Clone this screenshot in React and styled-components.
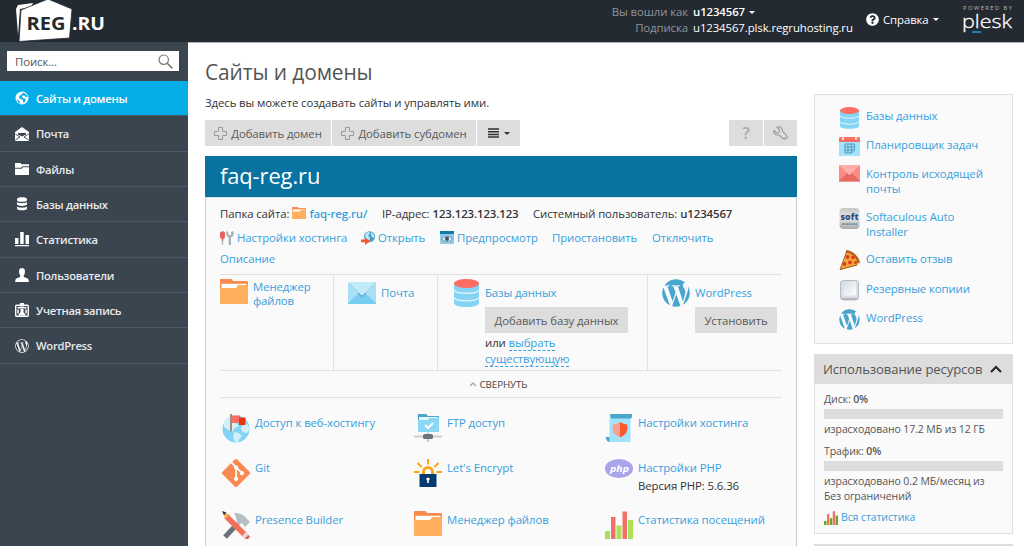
import React from 'react';
import styled, { createGlobalStyle } from 'styled-components';
import { FaWordpress, FaWordpressSimple, FaGitAlt, FaQuestionCircle } from 'react-icons/fa';

const Global = createGlobalStyle`
  * { box-sizing: border-box; }
  html, body { margin: 0; height: 546px; overflow: hidden; background: #fff; }
  body { font: 11.4px/15px "Open Sans", "Noto Sans", sans-serif; letter-spacing: -0.1px; color: #333; }
  svg { display: block; flex: none; letter-spacing: 0; }
`;

const Page = styled.div`width: 1024px; height: 546px; overflow: hidden; display: flex; flex-direction: column;`;
const T = styled.span`
  white-space: nowrap;
  font-weight: ${p => p.$w || 'inherit'};
  color: ${p => p.$c || 'inherit'};
  font-size: ${p => p.$s || 'inherit'};
`;
const Link = styled.a`color: #38a0dd; white-space: nowrap; font-weight: ${p => p.$w || 400};`;

/* Header */
const Header = styled.header`
  height: 42px; flex: none; background: #232a31; color: #fff; display: flex; align-items: flex-start;
`;
const Logo = styled.div`width: 188px; padding-left: 15px; flex: none;`;
const Account = styled.div`
  margin-left: auto; display: grid; grid-template-columns: auto 161px; column-gap: 5px; padding-top: 4px;
  line-height: 16px;
`;
const AccountLabel = styled(T)`color: #8f9499; text-align: right;`;
const AccountValue = styled.div`display: flex; align-items: center; gap: 4px; white-space: nowrap;`;
const Help = styled.div`display: flex; align-items: center; gap: 4px; margin: 12px 22px 0 12px; width: 74px; white-space: nowrap;`;
const Powered = styled.div`width: 62px; flex: none;`;
const Caret = styled.i`
  border: 3px solid transparent; border-top: 3.5px solid ${p => p.$c || '#fff'}; border-bottom: 0; width: 6px; flex: none;
`;

/* Sidebar */
const Body = styled.div`display: flex; flex: 1; min-height: 0;`;
const Sidebar = styled.nav`width: 188px; flex: none; background: #3a4550; padding-top: 9px;`;
const Search = styled.div`
  height: 20px; margin: 0 9px 10px 7px; padding: 0 6px 0 8px; background: #fff; color: #555;
  display: flex; align-items: center; justify-content: space-between;
`;
const NavItem = styled.a`
  height: 35.35px; display: flex; align-items: center; gap: 7px; padding: 0.4px 0 0 15px; font-weight: 600;
  color: ${p => (p.$on ? '#fff' : '#e9ebed')}; background: ${p => (p.$on ? '#04ade7' : 'none')};
  border-bottom: 1px solid #4b5763; font-size: 11.2px; letter-spacing: -0.25px;
`;

/* Content */
const Content = styled.div`flex: 1; border-top: 1px solid #b5b5b8; padding: 0 11px 0 17px; display: flex; align-items: flex-start;`;
const Main = styled.main`width: 592px; flex: none;`;
const Title = styled.h1`margin: 16px 0 0; font-weight: 400; font-size: 20.9px; line-height: 26px; color: #555;`;
const Intro = styled.p`margin: 10px 0 0; line-height: 15px;`;
const Toolbar = styled.div`display: flex; gap: 1px; margin-top: 10px; height: 26px;`;
const Button = styled.button`
  all: unset; box-sizing: border-box; height: 26px; width: ${p => p.$width}px; background: #ddd; color: #5a5a5a;
  display: flex; align-items: center; justify-content: center; gap: ${p => p.$gap || 4}px; white-space: nowrap;
  margin-top: ${p => p.$mt || 0}px;
`;
const Spacer = styled.div`flex: 1;`;
const Panel = styled.section`margin-top: 10px; height: 420px; background: #fafafa; border: solid #ccc; border-width: 0 1px;`;
const PanelHead = styled.h2`
  margin: 0 -1px; height: 42px; background: #0872a0; color: #fff; font-weight: 400; font-size: 21.9px; line-height: 40px;
  padding-left: 15px; border-bottom: 1px solid #d4e2e9;
`;
const PanelBody = styled.div`padding: 7px 14px 0 14px;`;
const Row = styled.div`display: flex; align-items: center; height: ${p => p.$h}px;`;
const Part = styled.div`display: flex; align-items: center; gap: 3px; width: ${p => p.$width}px; flex: none; white-space: nowrap;`;
const Tools = styled.div`display: flex; height: 97px; margin-top: 11px; border: solid #e1e1e1; border-width: 1px 0;`;
const Tool = styled.div`
  display: flex; align-items: flex-start; gap: ${p => p.$gap || 6}px; width: ${p => p.$width}px; flex: none;
  padding: 4px 0 0 ${p => p.$pad || 0}px; border-right: ${p => (p.$last ? 0 : 1)}px solid #e1e1e1;
`;
const MailSlot = styled.div`padding-top: 3px;`;
const ToolText = styled.div`padding-top: ${p => p.$top || 6}px; line-height: ${p => p.$lh || 15}px;`;
const Choose = styled(Link)`border-bottom: 1px dashed #38a0dd; display: inline-block; line-height: 15px;`;
const Collapse = styled.div`
  height: 27px; display: flex; align-items: center; justify-content: center; gap: 3px; font-size: 9.8px; color: #444;
  padding-right: 6px; border-bottom: 1px solid #e1e1e1;
`;
const Grid = styled.div`display: grid; grid-template-columns: 192px 191px 1fr; grid-template-rows: 45px 52px 45px; padding: 16px 0 0 2px;`;
const Feature = styled.div`display: flex; align-items: flex-start; gap: 5px;`;
const FeatureText = styled.div`line-height: 18px; white-space: nowrap;`;

/* Right column */
const Aside = styled.aside`width: 199px; margin: 51px 0 0 17px; flex: none;`;
const Box = styled.div`background: #fafafa; border: 1px solid #e0e0e0;`;
const Shortcuts = styled(Box)`height: 250px; padding: 12px 0 0 24px;`;
const Shortcut = styled.div`
  display: flex; gap: 6px; height: ${p => p.$h || 29.2}px; align-items: flex-start; line-height: 15px;
  & > div { padding-top: 1px; }
`;
const Usage = styled(Box)`margin-top: 10px; height: 180px;`;
const UsageHead = styled.div`
  height: 29px; background: #ddd; color: #555; font-size: 13.1px; display: flex; align-items: center;
  justify-content: space-between; padding: 0 10px 1px 8px;
`;
const UsageBody = styled.div`padding: 8px 9px 0; font-size: 10.5px; line-height: 15px; color: #555;`;
const Bar = styled.div`height: 10px; background: #ddd; margin: 2px 0 3px;`;
const Metric = styled.div`margin-bottom: 7px; height: ${p => p.$h}px; white-space: nowrap;`;
const AllStats = styled.div`display: flex; align-items: center; gap: 3px; margin-top: -1px;`;
const NextBox = styled.div`margin-top: 10px; height: 30px; background: #ddd;`;

const Svg = ({ w, h = w, vb, children }) => (
  <svg width={w} height={h} viewBox={vb || `0 0 ${w} ${h}`} fill="none">{children}</svg>
);

/* WordPress disc without its outer ring */
const WpDisc = styled(FaWordpress).attrs({ viewBox: '41 41 430 430' })`color: #4ba6cf; border-radius: 50%; overflow: hidden;`;

const RegLogo = () => (
  <Svg w={95} h={42}>
    <path d="M1 9 3 5 18 3 16 7 5 9 3 35Z" fill="#fff" />
    <path d="M6 10 33-1 57 9 54.5 38 4 41.5Z" fill="#fff" stroke="#232a31" strokeWidth=".8" />
    <text x="11.500" y="29.500" fontFamily="Open Sans" fontWeight="700" fontSize="18" fill="#232a31" textLength="39" lengthAdjust="spacingAndGlyphs">REG</text>
    <text x="57" y="29.500" fontFamily="Open Sans" fontWeight="700" fontSize="18" fill="#fff" textLength="33" lengthAdjust="spacingAndGlyphs">.RU</text>
  </Svg>
);
const PleskLogo = () => (
  <Svg w={54} h={40}>
    <text x="1" y="10" fontFamily="Open Sans" fontSize="5.800" fill="#b5b9bc" textLength="49">POWERED BY</text>
    <text x="0" y="27.500" fontFamily="Open Sans" fontWeight="300" fontSize="18.500" fill="#fff" stroke="#fff" strokeWidth=".3" textLength="50" lengthAdjust="spacingAndGlyphs">plesk</text>
    <path d="M10 31.200h9v1.600h-9z" fill="#1b9bd0" />
  </Svg>
);
const SearchIcon = () => (
  <Svg w={15}><circle cx="5.700" cy="5.700" r="4.700" stroke="#777" strokeWidth="1.200" /><path d="m9 9 5.300 5.300" stroke="#777" strokeWidth="1.700" /></Svg>
);
const NavGlobe = () => (
  <Svg w={14} vb="0 0 28 28"><circle cx="14" cy="14" r="13" fill="#fff" />
    <path d="M16 3.500c6 1 9 5 9 9l-4-1-3-3-3 1-1 3 3 2 4 1v4l-3 4-2-2v-4l-4-1-4-3 1-4 4-2Z" fill="#04ade7" /><path d="M4 17l4 2 2 4 2 2C8 25 5 22 4 17Z" fill="#04ade7" /></Svg>
);
const NavMail = () => (
  <Svg w={14}><path fill="#fff" d="M0 5 7 0l7 5v9H0Z" /><path d="M.3 7 5 10 .3 13M13.700 7 9 10l4.700 3" stroke="#3a4550" strokeWidth=".9" /><path d="M3 6h8v1.500L7 9.500 3 7.500Z" fill="#3a4550" /></Svg>
);
const NavFolder = () => (
  <Svg w={14} h={12}><path fill="#fff" d="M0 0h5.500l1 1.300H14v2H7.500L6.300 4.800H0ZM0 5.800h6.700L8 4.300h6V12H0Z" /></Svg>
);
const NavDb = () => (
  <Svg w={14} h={14}><path fill="#fff" d="M2 2.200C2-.4 12-.4 12 2.200v1c0 2-10 2-10 0ZM2 5c2 1.600 8 1.600 10 0v2.600c-1 1.900-9 1.900-10 0Zm0 4.600c2 1.600 8 1.600 10 0v2.200c-1 2-9 2-10 0Z" /></Svg>
);
const NavStats = () => (
  <Svg w={14} h={15}><path fill="#fff" d="M0 6h3.400v6H0ZM5.200 0h3.500v12H5.200Zm5.300 3H14v9h-3.500ZM0 13h14v1.200H0Z" /></Svg>
);
const NavUser = () => (
  <Svg w={14}><path fill="#fff" d="M4 3.400C4-1 10-1 10 3.400c0 2.400-1 3.400-1.400 4.700L9 9l4.200 1.800.8 3.200H0l.8-3.200L5 9l.4-.9C5 6.800 4 5.800 4 3.400Z" /></Svg>
);
const NavBadge = () => (
  <Svg w={14}><rect x=".7" y="2.200" width="12.600" height="11" rx="1" stroke="#fff" strokeWidth="1.400" /><path fill="#fff" d="M5 0h4v3.500H5ZM2.500 4h9v1.500h-9ZM5.500 6h3v3l2.500 3.500H3L5.500 9ZM2.300 6.500h1.500v4H2.300Zm8 0h1.500v4h-1.500Z" /></Svg>
);
const Plus = () => (
  <Svg w={13}><path d="M4.500.5h4v4h4v4h-4v4h-4v-4h-4v-4h4Z" stroke="#999" /></Svg>
);
const Menu = () => <Svg w={11} h={10}><path d="M0 1h11M0 3.700h11M0 6.400h11M0 9.100h11" stroke="#333" strokeWidth="1.500" /></Svg>;
const Wrench = () => (
  <Svg w={15}><path d="M1 4.500 3.500 7 6 6.500 6.500 4 4 1.200C6 .2 9.500 1 9.500 5l4.500 5c1 1.500-1.500 4-3.200 3L5.800 8.800C2.500 9.800.2 7 1 4.500Z" stroke="#999" strokeWidth="1.100" /><circle cx="12" cy="11.800" r=".7" fill="#999" /></Svg>
);
const Folder = ({ w = 28 }) => (
  <Svg w={w} h={w * 25 / 28} vb="0 0 28 25"><path fill="#fb8b4d" d="M0 1q0-1 1-1h10q1 0 2 2h14q1 0 1 1v6H0Z" /><path fill="#fff" d="M1.500 4.800h25V11h-25Z" /><path fill="#ffb05c" d="M0 9h16l2-3h9q1 0 1 1v17q0 1-1 1H1q-1 0-1-1Z" /></Svg>
);
const Mail = ({ w = 28, a = '#a7e1f8', b = '#77cdf0', c = '#c2ebfa', l = '#69aeca' }) => (
  <Svg w={w} h={w * 22 / 28} vb="0 0 28 22"><rect width="28" height="22" rx="1" fill={a} /><path d="m0 21 11-10h6l11 10v1H0Z" fill={b} /><path d="M0 0h28v1L16 13q-2 2-4 0L0 1Z" fill={c} /><path d="m10 11 2 2q2 2 4 0l2-2" stroke={l} strokeWidth="1.400" /><path d="m1 1 11 12m4 0L27 1" stroke={l} strokeWidth=".5" /></Svg>
);
const Db = ({ w = 25 }) => (
  <Svg w={w} h={w * 28 / 25} vb="0 0 25 28"><path fill="#86d4f5" d="M0 4v20c0 5.300 25 5.300 25 0V4Z" /><path d="M0 11c2 4.500 23 4.500 25 0M0 18.500c2 4.500 23 4.500 25 0" stroke="#e9f8fe" strokeWidth="1.200" /><ellipse cx="12.500" cy="4.500" rx="12.500" ry="4.500" fill="#ff6e62" /></Svg>
);
const Bars = ({ w = 28, g = '#a9e253' }) => (
  <Svg w={w} vb="0 0 28 28"><path fill={g} d="M0 20h5v8H0ZM11.500 14.500h5V28h-5ZM23 9h5v19h-5Z" /><path fill="#f0716a" d="M6 6h4.500v22H6ZM17.500.5h4.500V28h-4.500Z" /></Svg>
);
const HostTools = () => (
  <Svg w={14} h={14}><path fill="#e46262" d="M0 1.500Q2.500-1.200 5 1.500v4Q4.500 8 3.300 8v2H1.700V8Q.5 8 0 5.500Z" /><path fill="#aab0b4" d="M1.900 9h1.200v5H1.900ZM6.500 0l1.800 1v3h2.800V1L13 0q1.500 2.500 0 5l-2 1.500V14H8.700V6.500L6.800 5Q5.500 2.500 6.500 0Z" /></Svg>
);
const Open = () => (
  <Svg w={14} h={14}><circle cx="8.500" cy="5.700" r="5.500" fill="#4a9fc4" /><path fill="#b9e8fa" d="M5 2 8 .8l1 2-2 1.700 2 2-1 4-3-2-1-3Zm5-1 3 3v3l-2-1-1-2Z" /><path fill="#f15a29" d="M0 8.500h4V6.200l5 4-5 3.800v-2.700H0Z" /></Svg>
);
const Preview = () => (
  <Svg w={14} h={13}><rect width="14" height="13" rx="1" fill="#8fc9e4" /><path fill="#127ba5" d="M0 0h14v3H0Z" /><path fill="#e8f4f8" d="M1.500 8Q7 2.500 12.500 8 7 13 1.500 8Z" stroke="#587c90" strokeWidth=".7" /><circle cx="7" cy="7.800" r="2.100" fill="#37566a" /></Svg>
);
const FlagGlobe = () => (
  <Svg w={28} h={29}><circle cx="14" cy="15" r="13.500" fill="#84d3f4" />
    <path d="M2 9C4 5 8 2.500 12 2l3 2-1 5 3 3-4 2-3 4-5-3-3-2ZM22 8l4 3 1.500 5-3 3-4-1-2-4 2-2ZM12 18l5 1 3 3-3 3-1 3.200-3-.2-2-5Z" fill="#d3f0fa" />
    <path d="M9 0v17.500" stroke="#a18069" strokeWidth="1.800" /><path d="M10 1.500h8v7.500h-8Z" fill="#ff6e62" /><path d="M17 3.500h6.500V11H17Z" fill="#e8350d" /></Svg>
);
const Ftp = () => (
  <Svg w={28}><path fill="#4aa3c8" d="M4 0h8l2 2h11v5H4Z" /><path fill="#e5f7fd" d="M5 3h19v5H5Z" /><path fill="#8cd7f6" d="M4 6h10l1.500-2H25v14H4Z" /><path d="m11 11 3 3 5-5" stroke="#fff" strokeWidth="2" /><path d="M0 22.500h28M14 18.500V28" stroke="#c9ced1" strokeWidth="2.200" /><rect x="9" y="20" width="10" height="5" rx="1.500" fill="#6c757d" /></Svg>
);
const Scroll = () => (
  <Svg w={28}><path fill="#a3e2fb" d="M4.500 3h21v25h-21Z" /><path fill="#4ba6cc" d="M5 0h22v3l-1 1.500H7Q5 4 5 0ZM.8 23h3.700v5Q1.500 28 .8 23Z" /><path fill="#f9a090" d="M15 8q-3 2-7.200 2.500Q6 20 15 23.500Z" /><path fill="#fb592b" d="M15 8q3 2 7.200 2.500Q24 20 15 23.500Z" /></Svg>
);
const Encrypt = () => (
  <Svg w={28}><path d="M14 0v5.500M3.500 4l4 4M24.500 4l-4 4M0 13h5.500M22.500 13H28" stroke="#fba618" strokeWidth="2" /><path d="M9.500 16v-3a4.500 4.500 0 0 1 9 0v3" stroke="#fba618" strokeWidth="3" /><rect x="5.500" y="15" width="17" height="13" fill="#073b70" rx=".5" /><path fill="#fff" d="M14 18.800c2.300 0 1.800 2.200.8 2.700v2.500h-1.600v-2.500c-1-.5-1.500-2.700.8-2.700Z" /></Svg>
);
const Php = () => (
  <Svg w={28} h={19}><ellipse cx="14" cy="9.500" rx="14" ry="9.500" fill="#aaa4eb" /><text x="5" y="12.500" fontFamily="Open Sans" fontSize="9.500" fontStyle="italic" fontWeight="700" fill="#fff" textLength="19" lengthAdjust="spacingAndGlyphs">php</text></Svg>
);
const Builder = () => (
  <Svg w={28}><path d="m3 26 9-9.500" stroke="#697278" strokeWidth="5" /><path d="m12 16.500 6-6" stroke="#b5bec3" strokeWidth="4.500" /><path fill="#b5bec3" d="M12 2q8-1 13 6l3 3-5 5-3-4-5 0-1-6Z" /><path d="m4 5 19 19" stroke="#f36f58" strokeWidth="5.500" /><path fill="#fbb040" d="m2 2 6 1.500L3 8Z" /><path fill="#353b3e" d="m0 0 4.500 1.500L2 4.500Z" /><path d="m22 23 2.500 2.500" stroke="#ddd" strokeWidth="5.500" /><path d="m24.500 25.500 2 2" stroke="#ef6059" strokeWidth="5" /></Svg>
);
const Calendar = () => (
  <Svg w={21} h={21} vb="0 -1 21 21"><path fill="#a3e2fb" d="M0 4h21v15H0Z" /><path fill="#ff6e62" d="M0 1q0-1 2-1h17q2 0 2 1v4H0Z" /><path d="M4 0v3M17 0v3" stroke="#fff" strokeWidth="1.500" /><path d="M6 7h9.500v6l-3 3H6ZM9 7v9M12.300 7v9M6 10h9.500M6 13h9.500" stroke="#4a93b3" strokeWidth=".9" /></Svg>
);
const Soft = () => (
  <Svg w={21}><defs><linearGradient id="sg" x2="0" y2="1"><stop stopColor="#c8c8c8" /><stop offset=".5" stopColor="#e5e5e5" /><stop offset="1" stopColor="#aaa" /></linearGradient></defs><rect x=".5" width="20" height="21" rx="4" fill="url(#sg)" /><text x="1.500" y="11.500" fontFamily="Open Sans" fontWeight="800" fontSize="8" fill="#2e4e7e" textLength="18" lengthAdjust="spacingAndGlyphs">soft</text><text x="3" y="16.500" fontFamily="Open Sans" fontWeight="700" fontSize="3" fill="#3269a5" textLength="15">aculous</text></Svg>
);
const Pizza = () => (
  <Svg w={21}><path fill="#f5a638" d="M8 1 18 8q2 3 1 7L1 20Z" /><path d="M7 1q10 2 13 12" stroke="#b9621f" strokeWidth="2.500" /><path d="M7.500 2 1 19.500 18 15" stroke="#9a501a" strokeWidth=".9" /><g fill="#d8401c"><circle cx="8.500" cy="7" r="2" /><circle cx="14" cy="7.500" r="1.800" /><circle cx="11" cy="12.500" r="2" /><circle cx="5.500" cy="14" r="1.900" /><circle cx="16.500" cy="12.500" r="1.600" /></g></Svg>
);
const Key = () => (
  <Svg w={21}><defs><linearGradient id="kg" x2="1" y2="1"><stop stopColor="#d5dce4" /><stop offset="1" stopColor="#fff" /></linearGradient></defs><rect x="1.500" y=".5" width="18" height="19.500" rx="3" fill="#dce0e6" stroke="#b5bac2" /><rect x="4" y="1.500" width="13" height="14" rx="2" fill="url(#kg)" /><path d="M3 18.800h15" stroke="#999fa9" /></Svg>
);

const nav = [
  ['Сайты и домены', NavGlobe], ['Почта', NavMail], ['Файлы', NavFolder], ['Базы данных', NavDb],
  ['Статистика', NavStats], ['Пользователи', NavUser], ['Учетная запись', NavBadge], ['WordPress', () => <FaWordpressSimple size={14} />],
];
const features = [
  ['Доступ к веб-хостингу', FlagGlobe], ['FTP доступ', Ftp], ['Настройки хостинга', Scroll],
  ['Git', () => <FaGitAlt size={28} color="#f98950" viewBox="0 32 448 448" />], ["Let's Encrypt", Encrypt], ['Настройки PHP', Php, 'Версия PHP: 5.6.36'],
  ['Presence Builder', Builder], ['Менеджер файлов', Folder], ['Статистика посещений', Bars],
];
const shortcuts = [
  [['Базы данных'], () => <Svg w={21} h={22} vb="-1 0 27 28"><Db w={25} /></Svg>], [['Планировщик задач'], Calendar],
  [['Контроль исходящей', 'почты'], () => <Mail w={21} a="#fb8a80" b="#e76a62" c="#ffafa8" l="#d9665e" />, 42.500],
  [['Softaculous Auto', 'Installer'], Soft, 42.500], [['Оставить отзыв'], Pizza], [['Резервные копиии'], Key],
  [['WordPress'], () => <WpDisc size={21} />],
];

export default function App() {
  return (
    <Page>
      <Global />
      <Header>
        <Logo><RegLogo /></Logo>
        <Account>
          <AccountLabel>Вы вошли как</AccountLabel>
          <AccountValue><T $w={600}>u1234567</T><Caret /></AccountValue>
          <AccountLabel>Подписка</AccountLabel>
          <AccountValue>u1234567.plsk.regruhosting.ru</AccountValue>
        </Account>
        <Help><FaQuestionCircle size={13} /><T>Справка</T><Caret /></Help>
        <Powered><PleskLogo /></Powered>
      </Header>
      <Body>
        <Sidebar>
          <Search><T>Поиск...</T><SearchIcon /></Search>
          {nav.map(([name, Icon], i) => <NavItem key={name} $on={i === 0}><Icon /><T>{name}</T></NavItem>)}
        </Sidebar>
        <Content>
          <Main>
            <Title>Сайты и домены</Title>
            <Intro>Здесь вы можете создавать сайты и управлять ими.</Intro>
            <Toolbar>
              <Button $width={126}><Plus />Добавить домен</Button>
              <Button $width={144}><Plus />Добавить субдомен</Button>
              <Button $width={43} $gap={5}><Menu /><Caret $c="#333" /></Button>
              <Spacer />
              <Button $width={34}><T $s="16px" $c="#aaa" $w={600}>?</T></Button>
              <Button $width={33}><Wrench /></Button>
            </Toolbar>
            <Panel>
              <PanelHead>faq-reg.ru</PanelHead>
              <PanelBody>
                <Row $h={16}>
                  <Part $width={162}><T>Папка сайта:</T><Folder w={14} /><Link $w={600}>faq-reg.ru/</Link></Part>
                  <Part $width={151}><T>IP-адрес:</T><T $w={600}>123.123.123.123</T></Part>
                  <Part><T>Системный пользователь:</T><T $w={600}>u1234567</T></Part>
                </Row>
                <Row $h={33}>
                  <Part $width={141}><HostTools /><Link>Настройки хостинга</Link></Part>
                  <Part $width={79}><Open /><Link>Открыть</Link></Part>
                  <Part $width={112}><Preview /><Link>Предпросмотр</Link></Part>
                  <Part $width={100}><Link>Приостановить</Link></Part>
                  <Part><Link>Отключить</Link></Part>
                </Row>
                <Row $h={9}><Link>Описание</Link></Row>
                <Tools>
                  <Tool $width={114} $gap={5}><Folder /><ToolText $top={1} $lh={14}><Link>Менеджер<br />файлов</Link></ToolText></Tool>
                  <Tool $width={104} $pad={14} $gap={5}><MailSlot><Mail /></MailSlot><ToolText><Link>Почта</Link></ToolText></Tool>
                  <Tool $width={210} $pad={16}><Db />
                    <ToolText><Link>Базы данных</Link>
                      <Button $width={143} $mt={7}>Добавить базу данных</Button>
                      <ToolText $top={2}>или <Choose>выбрать</Choose><br /><Choose>существующую</Choose></ToolText>
                    </ToolText>
                  </Tool>
                  <Tool $last $width={134} $pad={14} $gap={5}><WpDisc size={28} />
                    <ToolText><Link>WordPress</Link><Button $width={82} $mt={7}>Установить</Button></ToolText>
                  </Tool>
                </Tools>
                <Collapse><Svg w={8} h={6}><path d="m1 5 3-3 3 3" stroke="#aab" strokeWidth="1.500" /></Svg><T>СВЕРНУТЬ</T></Collapse>
                <Grid>
                  {features.map(([name, Icon, note]) => (
                    <Feature key={name}><Icon /><FeatureText><Link>{name}</Link>{note && <div>{note}</div>}</FeatureText></Feature>
                  ))}
                </Grid>
              </PanelBody>
            </Panel>
          </Main>
          <Aside>
            <Shortcuts>
              {shortcuts.map(([lines, Icon, h], i) => (
                <Shortcut key={i} $h={h}><Icon /><div>{lines.map(l => <div key={l}><Link>{l}</Link></div>)}</div></Shortcut>
              ))}
            </Shortcuts>
            <Usage>
              <UsageHead><T>Использование ресурсов</T><Svg w={12} h={8}><path d="m1 7 5-5 5 5" stroke="#222" strokeWidth="2" /></Svg></UsageHead>
              <UsageBody>
                <Metric $h={45}>Диск: <T $w={600}>0%</T><Bar />израсходовано 17.2 МБ из 12 ГБ</Metric>
                <Metric $h={60}>Трафик: <T $w={600}>0%</T><Bar />израсходовано 0.2 МБ/месяц из<br />Без ограничений</Metric>
                <AllStats><Bars w={14} g="#67a91f" /><Link>Вся статистика</Link></AllStats>
              </UsageBody>
            </Usage>
            <NextBox />
          </Aside>
        </Content>
      </Body>
    </Page>
  );
}
